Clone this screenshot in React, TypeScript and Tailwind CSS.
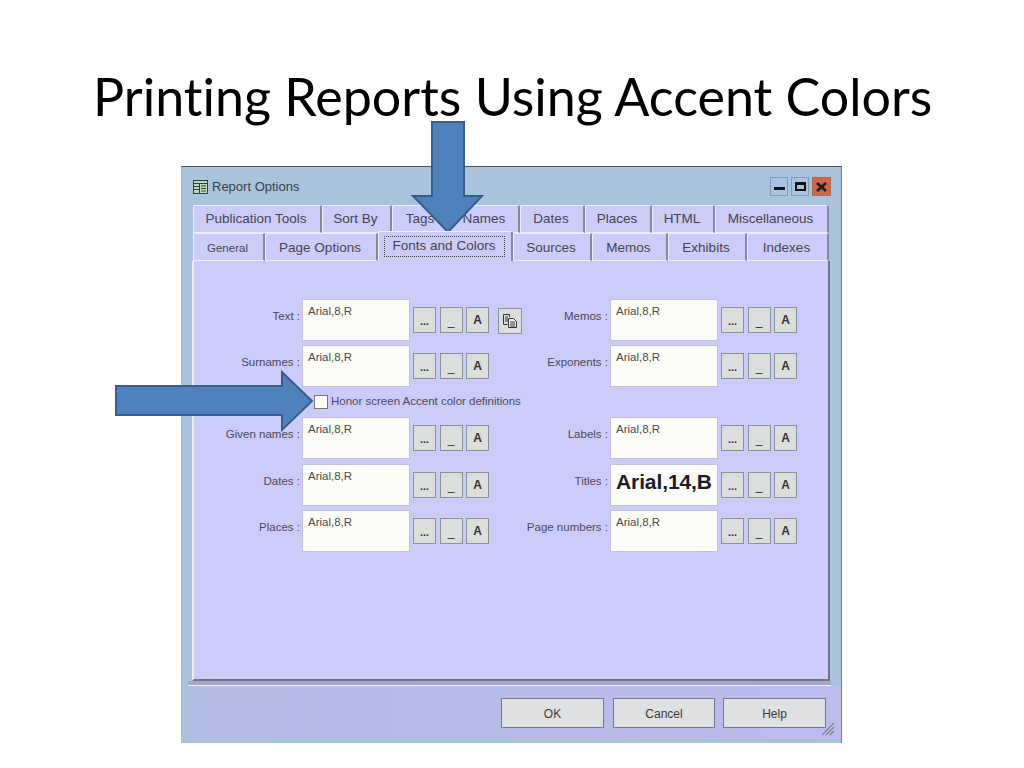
import React from "react";

const uiFont = "font-['Liberation_Sans',Arial,sans-serif]";

type TabDef = { label: string; w: string; active?: boolean; small?: boolean };

const topTabs: TabDef[] = [
  { label: "Publication Tools", w: "w-[129px]" },
  { label: "Sort By", w: "w-[70px]" },
  { label: "Tags", w: "w-[59px]" },
  { label: "Names", w: "w-[69px]" },
  { label: "Dates", w: "w-[65px]" },
  { label: "Places", w: "w-[67px]" },
  { label: "HTML", w: "w-[63px]" },
  { label: "Miscellaneous", w: "w-[114px]" },
];

const bottomTabs: TabDef[] = [
  { label: "General", w: "w-[72px]", small: true },
  { label: "Page Options", w: "w-[113px]" },
  { label: "Fonts and Colors", w: "w-[135px]", active: true },
  { label: "Sources", w: "w-[79px]" },
  { label: "Memos", w: "w-[76px]" },
  { label: "Exhibits", w: "w-[79px]" },
  { label: "Indexes", w: "w-[82px]" },
];

const Tab = ({ label, w, active, small, pad }: TabDef & { pad: string }) => (
  <div
    className={`${w} shrink-0 flex items-center justify-center rounded-t-[2px] border-t border-l border-t-[#eeeeff] border-l-[#eeeeff] border-r-2 border-r-[#85889e] bg-[#ccccfb] text-[#44444f] ${
      small ? "text-[11.5px]" : "text-[13.5px]"
    } ${active ? "h-[30px] -mt-[2px] relative z-10" : `h-[28px] pr-[2px] border-b border-b-[#eeeeff] ${pad}`}`}
  >
    {active ? (
      <span className="border border-dotted border-[#444] h-[21px] leading-[18px] w-[121px] mr-[2px] text-center">
        {label}
      </span>
    ) : (
      label
    )}
  </div>
);

const SmallBtn = ({ children, bold }: { children: React.ReactNode; bold?: boolean }) => (
  <div
    className={`w-[23px] h-[26px] shrink-0 flex items-center justify-center border border-[#87929a] bg-[#dcdedc] text-[#333] ${
      bold ? "font-bold text-[12px]" : "text-[12px]"
    }`}
  >
    {children}
  </div>
);

const FontField = ({
  label,
  value,
  big,
  labelW,
}: {
  label: string;
  value: string;
  big?: boolean;
  labelW: string;
}) => (
  <>
    <span className={`${labelW} flex justify-end pt-[10px] pr-[2px] text-[11.5px] leading-[14px] text-[#4a4a58] shrink-0 whitespace-nowrap`}>
      {label} :
    </span>
    <div
      className={`w-[108px] h-[42px] shrink-0 border border-[#c0c0dc] bg-[#fdfdf8] px-[5px] whitespace-nowrap ${
        big
          ? "font-bold text-[21px] leading-[33px] tracking-[-0.1px] text-[#1c1c28]"
          : "text-[11.5px] leading-[22px] text-[#4a4a4a]"
      }`}
    >
      {value}
    </div>
    <div className="flex gap-[3.5px] ml-[3px] mt-[8px]">
      <SmallBtn>
        <span className="font-bold text-[11px] leading-[12px] mt-[2px]">...</span>
      </SmallBtn>
      <SmallBtn>
        <span className="mt-[1px]">_</span>
      </SmallBtn>
      <SmallBtn bold>A</SmallBtn>
    </div>
  </>
);

const CopyIcon = () => (
  <svg width="16" height="16" viewBox="0 0 16 16" fill="none" stroke="#333" strokeWidth="1">
    <path d="M1.5 1.5h6v2.5M1.5 1.5v10h4" fill="#dcdedc" />
    <path d="M3 4h3M3 6h3M3 8h3" />
    <path d="M6.5 5.5h5l3 3v6h-8z" fill="#f4f4f0" />
    <path d="M8 9h5M8 11h5M8 13h5" />
  </svg>
);

const Row = ({
  left,
  right,
  extra,
  className,
}: {
  left: [string, string];
  right: [string, string, boolean?];
  extra?: React.ReactNode;
  className: string;
}) => (
  <div className={`flex ${className}`}>
    <div className="w-[334px] shrink-0 flex">
      <FontField label={left[0]} value={left[1]} labelW="w-[108px]" />
      {extra}
    </div>
    <FontField label={right[0]} value={right[1]} big={right[2]} labelW="w-[82px]" />
  </div>
);

const DialogButton = ({ label, className }: { label: string; className?: string }) => (
  <div
    className={`h-[30px] pt-[1px] flex items-center justify-center border border-[#6f7c90] bg-[#dfe0e2] text-[12px] text-[#3a3a3a] ${className ?? ""}`}
  >
    {label}
  </div>
);

const ReportIcon = () => (
  <svg width="15" height="14" viewBox="0 0 15 14" fill="none">
    <rect x="0.5" y="0.5" width="14" height="13" fill="#c3d8bd" stroke="#24463a" />
    <path d="M0.5 3.5h14M6.5 3.5v10M0.5 6.5h6M0.5 9.5h6M8 6h5M8 8.5h5M8 11h5" stroke="#24463a" />
  </svg>
);

export default function App() {
  return (
    <div className={`relative w-[1024px] h-[768px] overflow-hidden bg-white ${uiFont}`}>
      <h1 className="h-[166px] pt-[63px] pl-[93px] font-['Lato',sans-serif] font-normal text-[52px] leading-[66px] text-black whitespace-nowrap [font-variant-ligatures:none]">
        Printing Reports Using Accent Colors
      </h1>

      {/* dialog */}
      <div className="ml-[181px] w-[661px] h-[577px] border-t border-t-[#555] border-r border-r-[#6d7f92] bg-[#a9c3dc] flex flex-col">
        <div className="h-[38px] shrink-0 flex items-start pl-[12px] pt-[13px]">
          <ReportIcon />
          <span className="ml-[4px] text-[13px] leading-[14px] text-[#3c4048]">Report Options</span>
          <div className="ml-auto mr-[10px] -mt-[3px] flex gap-[3px]">
            <div className="w-[18px] h-[19px] bg-[#a9c4e0] border border-[#7e9ab8] flex items-center justify-center">
              <div className="w-[11px] h-[3px] mt-[3px] bg-[#111]" />
            </div>
            <div className="w-[18px] h-[19px] bg-[#a9c4e0] border border-[#7e9ab8] flex items-center justify-center">
              <div className="w-[11px] h-[9px] border-2 border-t-[3px] border-[#111]" />
            </div>
            <div className="w-[19px] h-[19px] bg-[#cf674a] border border-[#b5674f] flex items-center justify-center">
              <svg width="11" height="10" viewBox="0 0 11 10" stroke="#1c1c1c" strokeWidth="2.6">
                <path d="M1 1l9 8M10 1l-9 8" />
              </svg>
            </div>
          </div>
        </div>

        <div className="ml-[12px] flex h-[28px]">
          {topTabs.map((t) => (
            <Tab key={t.label} pad="pt-[1px]" {...t} />
          ))}
        </div>
        <div className="ml-[12px] flex h-[28px]">
          {bottomTabs.map((t) => (
            <Tab key={t.label} pad="pt-[3px]" {...t} />
          ))}
        </div>

        <div className="ml-[11px] w-[638px] h-[420px] shrink-0 bg-[#ccccfb] border-l-2 border-l-[#eeeeff] border-r-2 border-b-2 border-r-[#70738a] border-b-[#70738a] pt-[38px]">
          <Row
            className="h-[42px] mb-[4px]"
            left={["Text", "Arial,8,R"]}
            right={["Memos", "Arial,8,R"]}
            extra={
              <div className="w-[24px] h-[26px] ml-[9px] mt-[9px] shrink-0 flex items-center justify-center border border-[#87929a] bg-[#dcdedc]">
                <CopyIcon />
              </div>
            }
          />
          <Row className="h-[42px]" left={["Surnames", "Arial,8,R"]} right={["Exponents", "Arial,8,R"]} />
          <div className="h-[30px] flex items-center pl-[120px]">
            <div className="w-[14px] h-[14px] bg-white border border-[#777]" />
            <span className="ml-[3px] text-[11.5px] text-[#4a4a58]">Honor screen Accent color definitions</span>
          </div>
          <Row className="h-[42px] mb-[5px]" left={["Given names", "Arial,8,R"]} right={["Labels", "Arial,8,R"]} />
          <Row className="h-[42px] mb-[4px]" left={["Dates", "Arial,8,R"]} right={["Titles", "Arial,14,B", true]} />
          <Row className="h-[42px]" left={["Places", "Arial,8,R"]} right={["Page numbers", "Arial,8,R"]} />
        </div>

        <div className="h-[5px] ml-[7px] mr-[10px] shrink-0 border-b border-b-[#f0f0fa] bg-[#a4a8cc]" />

        <div className="relative flex-1 bg-gradient-to-r from-[#a9c3dc] from-0% via-[#b4bbe4] via-[3%] to-[#bcbcee] flex items-start justify-end pt-[12px] pr-[15px] border-b-[4px] border-b-[#a8c3d6]">
          <DialogButton label="OK" className="w-[103px] mr-[9px]" />
          <DialogButton label="Cancel" className="w-[102px] mr-[8px]" />
          <DialogButton label="Help" className="w-[103px]" />
          <svg className="absolute right-[6px] bottom-[3px]" width="14" height="14" viewBox="0 0 14 14" stroke="#7f8088" strokeWidth="1.2">
            <path d="M13 1L1 13M13 5L5 13M13 9L9 13" />
          </svg>
        </div>
      </div>

      {/* callout arrows */}
      <svg className="absolute left-0 top-0 pointer-events-none" width="1024" height="768" fill="#4f81bd" stroke="#385d8a" strokeWidth="2">
        <polygon points="432,122 464,122 464,196 482,196 448,232 413,196 432,196" />
        <polygon points="116,386 282,386 282,372 312,401 282,430 282,415 116,415" />
      </svg>
    </div>
  );
}
